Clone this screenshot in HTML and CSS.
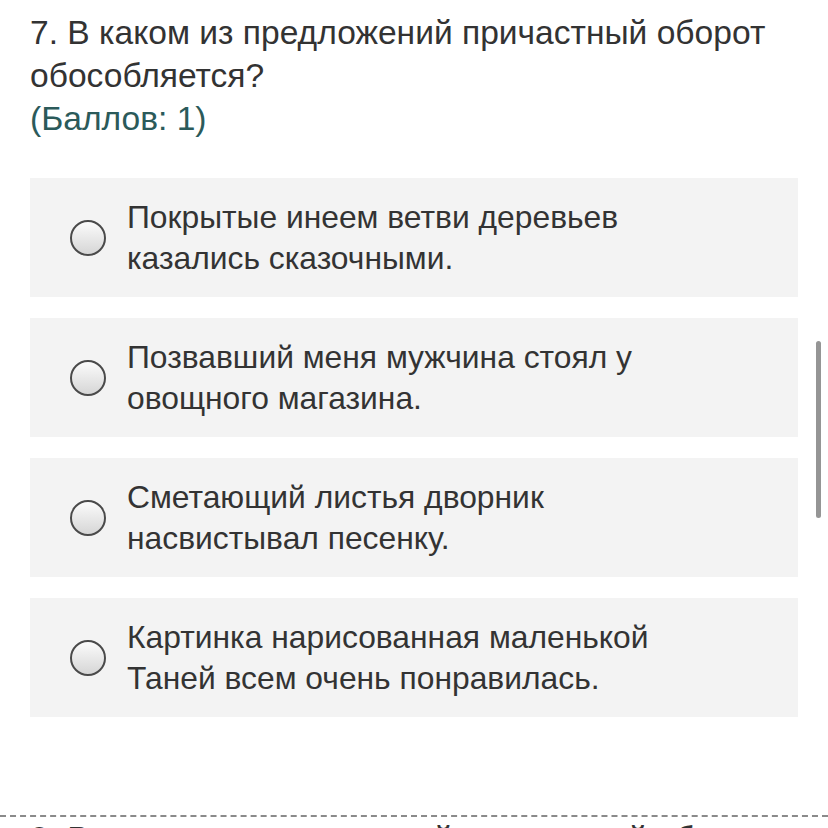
FILE: index.html
```
<!DOCTYPE html>
<html>
<head>
    <title>Тест</title>
    <link rel="stylesheet" href="styles.css">
</head>
<body>
    <div class="question">
        <h2 class="question-title">7. В каком из предложений причастный оборот обособляется?<br><span class="points">(Баллов: 1)</span></h2>
        <div class="options">
            <label class="option"><span class="radio"></span><span class="option-text">Покрытые инеем ветви деревьев казались сказочными.</span></label>
            <label class="option"><span class="radio"></span><span class="option-text">Позвавший меня мужчина стоял у овощного магазина.</span></label>
            <label class="option"><span class="radio"></span><span class="option-text">Сметающий листья дворник насвистывал песенку.</span></label>
            <label class="option"><span class="radio"></span><span class="option-text">Картинка нарисованная маленькой Таней всем очень понравилась.</span></label>
        </div>
    </div>
    <div class="question next">
        <h2 class="question-title">8. В каком из предложений причастный оборот не обособляется?</h2>
    </div>
    <div class="scrollbar"></div>
</body>
</html>
```
FILE: styles.css
```
html, body {
    height: 100%;
}

body {
    font-family: "Liberation Sans", Arial, sans-serif;
    background-color: #fff;
    margin: 0;
    padding: 0;
    overflow: hidden;
}

.question {
    padding: 0 30px;
}

.question-title {
    font-size: 33.6px;
    font-weight: normal;
    line-height: 43px;
    color: #333;
    margin: 11px 0 0 0;
}

.points {
    color: #2b5a5a;
}

.options {
    margin-top: 38px;
    margin-bottom: 98px;
}

.option {
    display: flex;
    align-items: center;
    height: 119px;
    padding-left: 40px;
    margin-bottom: 21px;
    background-color: #f3f3f3;
    box-sizing: border-box;
}

.radio {
    flex: none;
    width: 36px;
    height: 36px;
    border: 2px solid #4a4a4a;
    border-radius: 50%;
    box-sizing: border-box;
    background: linear-gradient(#fbfbfb, #d6d6d6);
    margin-right: 21px;
}

.option-text {
    font-size: 31.8px;
    line-height: 41px;
    color: #333;
    max-width: 580px;
}

.next {
    border-top: 2px dashed #8a8a8a;
}

.next .question-title {
    margin-top: 0;
    padding-top: 0;
}

.scrollbar {
    position: absolute;
    top: 341px;
    right: 7px;
    width: 5px;
    height: 177px;
    border-radius: 3px;
    background-color: #959595;
}
```
